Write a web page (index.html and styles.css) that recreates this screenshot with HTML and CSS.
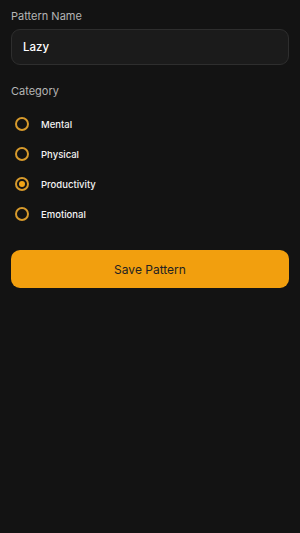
FILE: index.html
```html
<!DOCTYPE html>
<html lang="en">
<head>
    <meta charset="UTF-8">
    <meta name="viewport" content="width=device-width, initial-scale=1.0">
    <title>New Pattern</title>
    <link rel="stylesheet" href="styles.css">
</head>
<body>
    <div class="form">
        <div class="label">Pattern Name</div>
        <div class="input">Lazy</div>
        <div class="label cat">Category</div>
        <div class="options">
            <div class="opt"><span class="radio"></span>Mental</div>
            <div class="opt"><span class="radio"></span>Physical</div>
            <div class="opt"><span class="radio on"></span>Productivity</div>
            <div class="opt"><span class="radio"></span>Emotional</div>
        </div>
        <div class="save">Save Pattern</div>
    </div>
</body>
</html>
```

FILE: styles.css
```css
html, body { margin: 0; padding: 0; background-color: #131313; height: 100%}
body { font-family: "Inter", "Liberation Sans", sans-serif; color: #fff}
.form { padding: 9px 11px 0 11px}
.label { font-size: 11px; color: #b5b5b5; line-height: 14px}
.input { margin-top: 6px; height: 36px; box-sizing: border-box; border: 1px solid #2e2e2e; border-radius: 9px; background-color: #1b1b1b; padding: 0 11px; display: flex; align-items: center; font-size: 11.5px; font-weight: 500}
.cat { margin-top: 19px}
.options { display: flex; flex-direction: column; gap: 16px; margin-top: 19px; padding-left: 4px}
.opt { display: flex; align-items: center; font-size: 9.5px; font-weight: 500; height: 14px; color: #f2f2f2}
.radio { width: 10px; height: 10px; border: 2px solid #d79a2c; border-radius: 50%; margin-right: 12px; display: flex; align-items: center; justify-content: center}
.radio.on::after { content: ""; width: 6px; height: 6px; border-radius: 50%; background-color: #f2a516}
.save { margin-top: 29px; height: 38px; border-radius: 9px; background-color: #f29f0e; color: #222; font-size: 12px; display: flex; align-items: center; justify-content: center}
```
